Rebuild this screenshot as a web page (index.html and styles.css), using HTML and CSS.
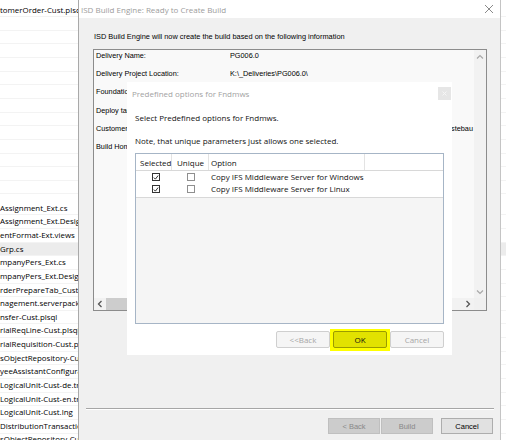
FILE: index.html
```html
<!DOCTYPE html>
<html>
<head>
<meta charset="utf-8">
<title>ISD Build Engine</title>
<link rel="stylesheet" href="styles.css">
</head>
<body>
<div class="desk">
  <div class="files">
    <div class="file first">tomerOrder-Cust.plsql</div>
    <div class="blank"></div>
    <div class="file">Assignment_Ext.cs</div>
    <div class="file">Assignment_Ext.Designer.cs</div>
    <div class="file">entFormat-Ext.views</div>
    <div class="file sel">Grp.cs</div>
    <div class="file">mpanyPers_Ext.cs</div>
    <div class="file">mpanyPers_Ext.Designer.cs</div>
    <div class="file">rderPrepareTab_Cust.plsql</div>
    <div class="file">nagement.serverpackage</div>
    <div class="file">nsfer-Cust.plsql</div>
    <div class="file">rialReqLine-Cust.plsql</div>
    <div class="file">rialRequisition-Cust.plsql</div>
    <div class="file">sObjectRepository-Cust.xml</div>
    <div class="file">yeeAssistantConfiguration</div>
    <div class="file">LogicalUnit-Cust-de.trans</div>
    <div class="file">LogicalUnit-Cust-en.trans</div>
    <div class="file">LogicalUnit-Cust.lng</div>
    <div class="file">DistributionTransaction</div>
    <div class="file last">sObjectRepository-Cust.xml</div>
  </div>

  <div class="win main">
    <div class="titlebar">
      <span class="title">ISD Build Engine: Ready to Create Build</span>
      <svg class="x" width="10" height="10" viewBox="0 0 10 10"><path d="M1 1L9 9M9 1L1 9" stroke="#8a8a8a" stroke-width="1" fill="none"/></svg>
    </div>
    <div class="mainbody">
      <p class="intro">ISD Build Engine will now create the build based on the following information</p>
      <div class="infobox">
        <div class="infotop">
          <div class="inforows">
            <div class="irow"><span class="lbl">Delivery Name:</span><span class="val">PG006.0</span></div>
            <div class="irow"><span class="lbl">Delivery Project Location:</span><span class="val">K:\_Deliveries\PG006.0\</span></div>
            <div class="irow"><span class="lbl">Foundation</span><span class="val"></span></div>
            <div class="irow"><span class="lbl">Deploy target</span><span class="val"></span></div>
            <div class="irow"><span class="lbl">Customer</span><span class="val end"><span>stebau</span></span></div>
            <div class="irow"><span class="lbl">Build Home</span><span class="val"></span></div>
          </div>
          <div class="vscroll">
            <svg width="8" height="6" viewBox="0 0 8 6"><path d="M1 4.5L4 1.5L7 4.5" stroke="#a8a8a8" stroke-width="1.2" fill="none"/></svg>
            <svg width="8" height="6" viewBox="0 0 8 6"><path d="M1 1.5L4 4.5L7 1.5" stroke="#a8a8a8" stroke-width="1.2" fill="none"/></svg>
          </div>
        </div>
        <div class="hscroll">
          <svg class="harr" width="6" height="8" viewBox="0 0 6 8"><path d="M4.5 1L1.5 4L4.5 7" stroke="#555" stroke-width="1.3" fill="none"/></svg>
          <span class="thumb"></span>
          <span class="track"></span>
          <svg class="harr" width="6" height="8" viewBox="0 0 6 8"><path d="M1.5 1L4.5 4L1.5 7" stroke="#555" stroke-width="1.3" fill="none"/></svg>
          <span class="corner"></span>
        </div>
      </div>
      <div class="sep"></div>
      <div class="mainbtns">
        <button class="wbtn off">&lt; Back</button>
        <button class="wbtn off">Build</button>
        <button class="wbtn cancel">Cancel</button>
      </div>
    </div>
  </div>

  <div class="win popup">
    <div class="ptitle">
      <span class="ptext">Predefined options for Fndmws</span>
      <span class="pclose"><svg width="7" height="7" viewBox="0 0 7 7"><path d="M1.5 1.5L5.5 5.5M5.5 1.5L1.5 5.5" stroke="#f6f6f6" stroke-width="1" fill="none"/></svg></span>
    </div>
    <div class="pbody">
      <p class="pline first">Select Predefined options for Fndmws.</p>
      <p class="pline">Note, that unique parameters just allows one selected.</p>
      <div class="grid">
        <div class="ghead">
          <span class="c1">Selected</span>
          <span class="c2">Unique</span>
          <span class="c3">Option</span>
          <span class="c4"></span>
        </div>
        <div class="grows">
          <div class="grow">
            <span class="c1"><span class="cb on"><svg width="7" height="7" viewBox="0 0 7 7"><path d="M1 3.6L2.8 5.4L6 1.2" stroke="#222" stroke-width="1.1" fill="none"/></svg></span></span>
            <span class="c2"><span class="cb"></span></span>
            <span class="c3">Copy IFS Middleware Server for Windows</span>
          </div>
          <div class="grow">
            <span class="c1"><span class="cb on"><svg width="7" height="7" viewBox="0 0 7 7"><path d="M1 3.6L2.8 5.4L6 1.2" stroke="#222" stroke-width="1.1" fill="none"/></svg></span></span>
            <span class="c2"><span class="cb"></span></span>
            <span class="c3">Copy IFS Middleware Server for Linux</span>
          </div>
        </div>
      </div>
      <div class="pbtns">
        <button class="pbtn dis">&lt;&lt;Back</button>
        <span class="hilite"><button class="pbtn ok">OK</button></span>
        <button class="pbtn dis">Cancel</button>
      </div>
    </div>
  </div>
</div>
</body>
</html>
```

FILE: styles.css
```css
html, body {
  margin: 0;
  padding: 0;
}
body {
  width: 506px;
  height: 440px;
  overflow: hidden;
  background: #fff;
  font-family: "Open Sans", "Noto Sans", sans-serif;
}
.desk {
  position: relative;
  width: 506px;
  height: 440px;
  overflow: hidden;
}

/* background file list */
.files {
  display: flex;
  flex-direction: column;
  padding-top: 3px;
  font-size: 7.9px;
  color: #000;
}
.file {
  height: 13.65px;
  line-height: 13.65px;
  white-space: nowrap;
  box-shadow: inset 0 -1px 0 #f3f3f3;
  flex: none;
}
.file.first {
  height: 14px;
  line-height: 14px;
}
.file.last {
  line-height: 11px;
}
.file.sel {
  background: #ececec;
}
.blank {
  height: 184.7px;
  flex: none;
  background: repeating-linear-gradient(to bottom, #fff 0, #fff 12.65px, #f3f3f3 12.65px, #f3f3f3 13.65px);
}

/* windows */
.win {
  position: absolute;
  box-sizing: border-box;
}
.main {
  left: 78px;
  top: 0;
  width: 423px;
  height: 450px;
  background: #f0f0f0;
  border-left: 1px solid #a9a9a9;
  border-right: 1px solid #c4c4c4;
  display: flex;
  flex-direction: column;
}
.titlebar {
  height: 18px;
  background: #fff;
  display: flex;
  align-items: center;
  justify-content: space-between;
  padding: 0 6px 0 2px;
  flex: none;
}
.title {
  font-size: 8px;
  color: #9c9c9c;
  white-space: nowrap;
}
.mainbody {
  display: flex;
  flex-direction: column;
}
.intro {
  margin: 14px 0 0 15px;
  height: 10px;
  line-height: 10px;
  font-family: "Liberation Sans", Arial, sans-serif;
  font-size: 7.4px;
  color: #000;
  white-space: nowrap;
}
.infobox {
  margin: 7px 0 0 14px;
  width: 394px;
  height: 262px;
  box-sizing: border-box;
  border: 1px solid #8c8c8c;
  background: #f9f9f9;
  display: flex;
  flex-direction: column;
}
.infotop {
  flex: 1;
  display: flex;
  min-height: 0;
}
.inforows {
  flex: 1;
  min-width: 0;
  display: flex;
  flex-direction: column;
  font-family: "Liberation Sans", Arial, sans-serif;
  font-size: 7.3px;
  color: #000;
}
.irow {
  height: 18.2px;
  line-height: 12px;
  display: flex;
  white-space: nowrap;
  flex: none;
}
.lbl {
  width: 134px;
  padding-left: 2px;
  flex: none;
  overflow: hidden;
}
.val {
  flex: 1;
  overflow: hidden;
  display: flex;
}
.val.end {
  justify-content: flex-end;
  padding-right: 1px;
}
.vscroll {
  width: 12px;
  background: #f2f2f2;
  display: flex;
  flex-direction: column;
  justify-content: space-between;
  align-items: center;
  padding: 4px 0 3px;
  box-sizing: border-box;
  flex: none;
}
.hscroll {
  height: 12px;
  display: flex;
  align-items: center;
  background: #f2f2f2;
  flex: none;
}
.harr {
  width: 6px;
  margin: 0 3px;
  flex: none;
}
.thumb {
  width: 40px;
  height: 100%;
  background: #cdcdcd;
  flex: none;
}
.track {
  flex: 1;
}
.corner {
  width: 12px;
  height: 100%;
  background: #f0f0f0;
  flex: none;
}
.sep {
  margin: 97px 6px 0 7px;
  border-top: 1px solid #a6a6a6;
  border-bottom: 1px solid #fff;
}
.mainbtns {
  display: flex;
  justify-content: flex-end;
  gap: 1px;
  margin: 8px 7px 0 0;
}
.wbtn {
  width: 52px;
  height: 16px;
  box-sizing: border-box;
  padding: 0;
  margin: 0;
  font-family: "Liberation Sans", Arial, sans-serif;
  font-size: 7.5px;
  border: 1px solid #bfbfbf;
  background: #cccccc;
  color: #888;
}
.wbtn.cancel {
  margin-left: 7px;
  background: #e1e1e1;
  border-color: #adadad;
  color: #000;
}

/* popup */
.popup {
  left: 127px;
  top: 82px;
  width: 325px;
  height: 273px;
  background: #fff;
  display: flex;
  flex-direction: column;
}
.ptitle {
  height: 22px;
  display: flex;
  align-items: center;
  justify-content: space-between;
  padding: 0 1px 0 5px;
  flex: none;
}
.ptext {
  font-size: 8px;
  color: #a2a2a2;
  white-space: nowrap;
}
.pclose {
  width: 13px;
  height: 13px;
  background: #e6e6e6;
  display: flex;
  align-items: center;
  justify-content: center;
}
.pbody {
  padding: 0 8px;
  display: flex;
  flex-direction: column;
}
.pline {
  margin: 12px 0 0;
  height: 11px;
  line-height: 11px;
  font-size: 8px;
  color: #111;
  white-space: nowrap;
}
.pline.first {
  margin-top: 7.5px;
}
.grid {
  margin-top: 7.5px;
  height: 171px;
  box-sizing: border-box;
  border: 1px solid #a6b5c6;
  background: #f5f5f5;
  font-size: 8px;
  color: #111;
}
.ghead, .grow {
  display: flex;
  white-space: nowrap;
}
.ghead {
  height: 17px;
  line-height: 17px;
  background: #fff;
  border-bottom: 1px solid #d8d8d8;
  box-sizing: border-box;
}
.ghead .c1, .ghead .c2, .ghead .c3 {
  border-right: 1px solid #e3e3e3;
}
.c1 {
  width: 36px;
  padding-left: 4px;
  box-sizing: border-box;
  flex: none;
}
.c2 {
  width: 37px;
  padding-left: 5px;
  box-sizing: border-box;
  flex: none;
}
.c3 {
  width: 156px;
  padding-left: 2px;
  box-sizing: border-box;
  flex: none;
}
.c4 {
  flex: 1;
}
.grows {
  background: #fff;
  border-bottom: 1px solid #d8d8d8;
  padding-bottom: 2px;
}
.grow {
  height: 12px;
  line-height: 12px;
  align-items: center;
}
.grow .c1, .grow .c2 {
  padding: 0;
  display: flex;
  justify-content: center;
  align-items: center;
}
.grow .c1 {
  padding-left: 3px;
}
.cb {
  width: 8px;
  height: 8px;
  box-sizing: border-box;
  border: 1px solid #8f8f8f;
  background: #fff;
  display: flex;
  align-items: center;
  justify-content: center;
}
.cb.on {
  border-color: #333;
}
.pbtns {
  margin-top: 7px;
  display: flex;
  justify-content: flex-end;
  gap: 3px;
}
.pbtn {
  width: 54px;
  height: 17px;
  box-sizing: border-box;
  margin: 0;
  padding: 0;
  font-family: "Open Sans", "Noto Sans", sans-serif;
  font-size: 8px;
  border: 1px solid #cfcfcf;
  background: #f5f5f5;
  color: #a6a6a6;
  border-radius: 2px;
}
.hilite {
  background: #ffff00;
  padding: 2px 3px 3px;
  margin: -2px -3px -3px;
  display: flex;
}
.pbtn.ok {
  background: #e2e200;
  border-color: #9c9c00;
  color: #111;
}
```
